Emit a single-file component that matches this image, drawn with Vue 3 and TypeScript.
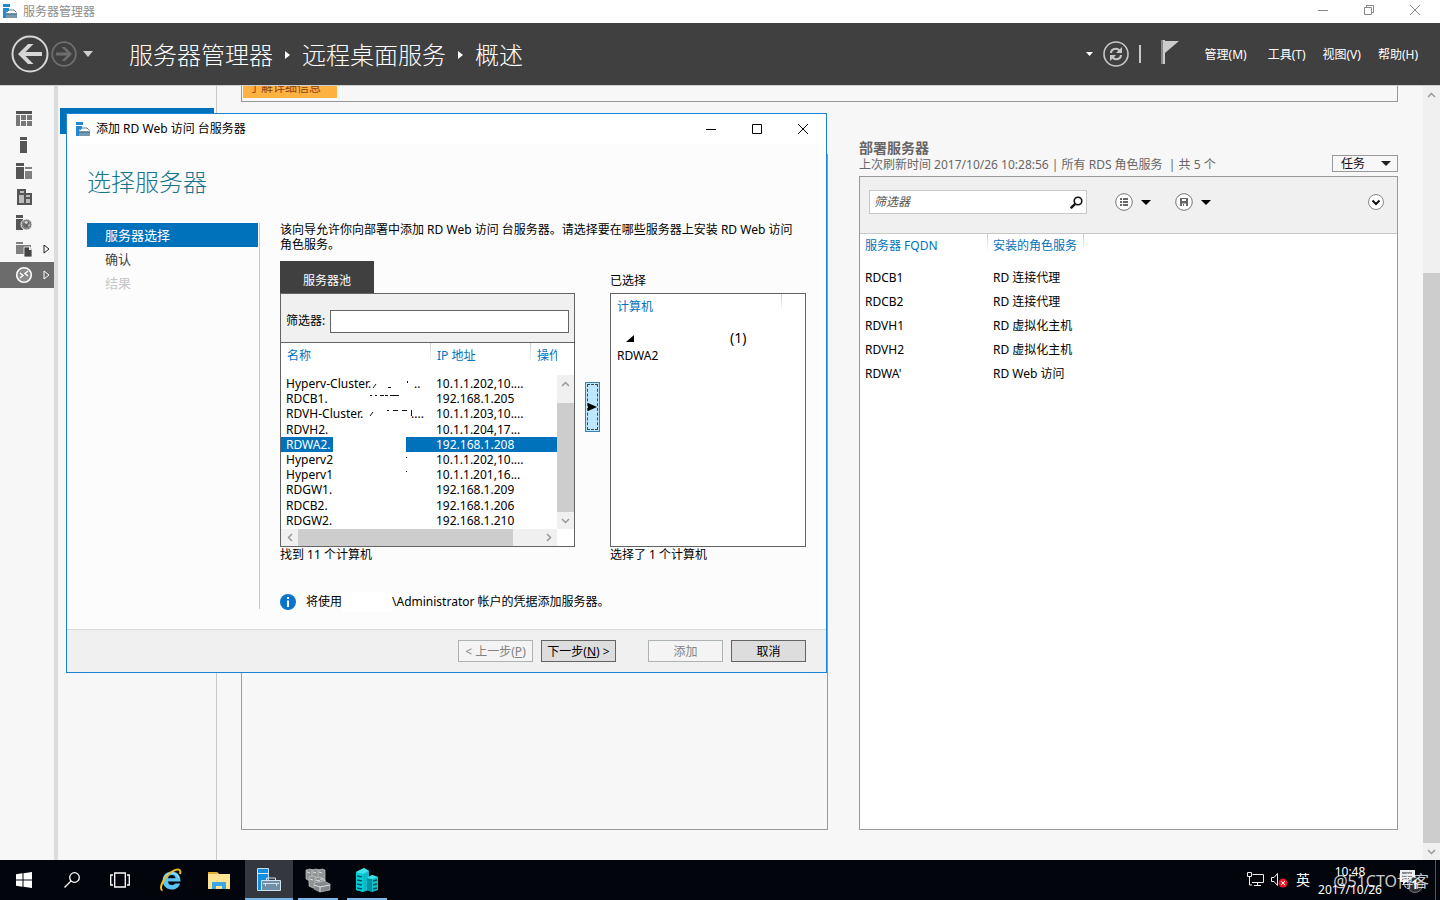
<script setup lang="ts">
import { ref } from 'vue'

interface Server { name: string; ip: string; tail?: string }

const pool: Server[] = [
  { name: 'Hyperv-Cluster.', ip: '10.1.1.202,10....', tail: '\u00a0..' },
  { name: 'RDCB1.', ip: '192.168.1.205' },
  { name: 'RDVH-Cluster.', ip: '10.1.1.203,10....', tail: '....' },
  { name: 'RDVH2.', ip: '10.1.1.204,17...' },
  { name: 'RDWA2.', ip: '192.168.1.208' },
  { name: 'Hyperv2', ip: '10.1.1.202,10....' },
  { name: 'Hyperv1', ip: '10.1.1.201,16...' },
  { name: 'RDGW1.', ip: '192.168.1.209' },
  { name: 'RDCB2.', ip: '192.168.1.206' },
  { name: 'RDGW2.', ip: '192.168.1.210' },
]
const selected = ref('RDWA2.')

const deployed = [
  { fqdn: 'RDCB1', role: 'RD 连接代理' },
  { fqdn: 'RDCB2', role: 'RD 连接代理' },
  { fqdn: 'RDVH1', role: 'RD 虚拟化主机' },
  { fqdn: 'RDVH2', role: 'RD 虚拟化主机' },
  { fqdn: 'RDWA', role: 'RD Web 访问' },
]
const menus = ['管理(M)', '工具(T)', '视图(V)', '帮助(H)']
const poolFilter = ref('')
const filter = ref('')
</script>

<template>
  <div class="desktop">
    <header class="titlebar">
      <svg class="app-icon" width="14" height="15" viewBox="0 0 14 15"><path d="M0 0h7v3H0zM0 4h6v2L3 8v6H0z" fill="#1e8ad6"/><path d="M3 9h11v5H3z" fill="#7896ac"/><path d="M3.500 8.500 6 6h5l2.500 2.500M3 10.500h11" fill="none" stroke="#567c96"/></svg>
      <span>服务器管理器</span>
      <div class="win-controls">
        <button aria-label="最小化"><svg width="10" height="10"><path d="M0 5.500h10" stroke="#888"/></svg></button>
        <button aria-label="还原"><svg width="10" height="10" fill="none" stroke="#888"><path d="M.5 2.500h7v7h-7zM2.500 2.500v-2h7v7h-2"/></svg></button>
        <button aria-label="关闭"><svg width="10" height="10"><path d="M0 0l10 10M10 0L0 10" stroke="#888"/></svg></button>
      </div>
    </header>

    <div class="banner">
      <button class="back" aria-label="后退"><svg width="38" height="38" viewBox="0 0 38 38"><circle cx="19" cy="19" r="17.500" fill="none" stroke="#d6d6d6" stroke-width="2"/><path d="M7 19 17 9h5.500l-8 8H31v4H14.500l8 8H17z" fill="#d6d6d6"/></svg></button>
      <button class="forward" aria-label="前进"><svg width="26" height="26" viewBox="0 0 26 26"><circle cx="13" cy="13" r="11.800" fill="none" stroke="#6e6e6e" stroke-width="1.800"/><path d="M21 13l-7-7h-3.500l5.500 5.500H5v3h11L10.500 20H14z" fill="#6e6e6e"/></svg></button>
      <button class="history" aria-label="历史"><svg width="10" height="6"><path d="M0 0h10L5 6z" fill="#d0d0d0"/></svg></button>
      <nav class="crumbs">
        <span>服务器管理器</span>
        <svg width="5" height="8"><path d="M0 0l5 4-5 4z" fill="#fff"/></svg>
        <span>远程桌面服务</span>
        <svg width="5" height="8"><path d="M0 0l5 4-5 4z" fill="#fff"/></svg>
        <span>概述</span>
      </nav>
      <div class="banner-tools">
        <svg width="7" height="4"><path d="M0 0h7L3.500 4z" fill="#fff"/></svg>
        <button aria-label="刷新"><svg width="26" height="26" viewBox="0 0 26 26" fill="none"><circle cx="13" cy="13" r="12" stroke="#c8c8c8" stroke-width="1.600"/><path d="M8 12c0-4.500 6-5.500 8.500-2.500M18 14c0 4.500-6 5.500-8.500 2.500" stroke="#c8c8c8" stroke-width="2"/><path d="M19 6v6h-6zM7 20v-6h6z" fill="#c8c8c8"/></svg></button>
        <i class="bar"></i>
        <button aria-label="通知" class="flag"><svg width="18" height="24"><path d="M1 0v24" stroke="#888" stroke-width="2"/><path d="M3 0v24" stroke="#ccc" stroke-width="2"/><path d="M4 1h14L4 13z" fill="#ccc"/></svg></button>
      </div>
      <nav class="menus"><button v-for="m in menus" :key="m">{{ m }}</button></nav>
    </div>

    <main class="workspace">
      <nav class="rail">
        <button aria-label="仪表板"><svg width="16" height="16"><path d="M0 0h16v3H0z" fill="#505050"/><path d="M0 4h4v11H0zM5 4h5v5H5zM11 4h5v5h-5zM5 10h5v5H5zM11 10h5v5h-5z" fill="#777"/></svg></button>
        <button aria-label="本地服务器"><svg width="16" height="16"><path d="M4 0h7v3H4zM4 4h7v12H4z" fill="#555"/></svg></button>
        <button aria-label="所有服务器"><svg width="16" height="16"><path d="M0 0h8v3H0zM0 4h8v12H0z" fill="#555"/><path d="M9 4h7v2H9zM9 8h7v8H9z" fill="#808080"/></svg></button>
        <button aria-label="AD DS"><svg width="16" height="16"><path d="M1 0h9v4h6v12H1z" fill="#555"/><path d="M3 6h5v8H3zM10 10h4v4h-4zM4 2h4v2H4zM10 6h4v2h-4z" fill="#bbb"/></svg></button>
        <button aria-label="DNS"><svg width="16" height="16"><path d="M0 0h7v3H0zM0 4h7v11H0z" fill="#555"/><circle cx="10.500" cy="9.500" r="5.500" fill="#666" stroke="#f7f7f7"/><circle cx="10.500" cy="9.500" r="4" fill="none" stroke="#999"/><path d="M8 7l3-1 1 2-2 1zM12 10l2-1-1 3z" fill="#ddd"/></svg></button>
        <button aria-label="文件和存储服务"><svg width="16" height="16"><path d="M0 1h7v2H0zM0 4h15v9H0z" fill="#808080"/><path d="M8 6h6l2 2v8H8z" fill="#444" stroke="#f7f7f7" stroke-width=".8"/><path d="M13 5v4h3" fill="#eee"/></svg><svg class="expand" width="7" height="10"><path d="M1 1v8l5-4z" fill="none" stroke="#222"/></svg></button>
        <button aria-label="远程桌面服务" class="current"><svg width="18" height="18"><circle cx="9" cy="9" r="7.300" fill="#8a8a8a" stroke="#fff" stroke-width="1.600"/><path d="M5 7l3 2.500L5 12M13 5l-3 2.500 3 2.500" fill="none" stroke="#fff" stroke-width="1.400"/></svg><svg class="expand" width="7" height="10"><path d="M1 1v8l5-4z" fill="none" stroke="#fff"/></svg></button>
      </nav>
      <aside class="subnav"><div class="subnav-current"></div></aside>

      <section class="content">
        <div class="notice"><button>了解详细信息</button></div>
        <div class="columns">
          <div class="overview"></div>
          <section class="deploy">
            <div class="deploy-head">
              <div><h2>部署服务器</h2><p>上次刷新时间 2017/10/26 10:28:56 | 所有 RDS 角色服务 &nbsp;| 共 5 个</p></div>
              <button class="tasks">任务<svg width="10" height="5"><path d="M0 0h10L5 5z" fill="#222"/></svg></button>
            </div>
            <div class="deploy-box">
              <div class="toolbar">
                <label class="search"><input v-model="filter" aria-label="筛选服务器" placeholder="筛选器"><svg width="13" height="13" fill="none" stroke="#111"><circle cx="8" cy="5" r="3.800" stroke-width="1.600"/><path d="M5.200 7.800.8 12.200" stroke-width="2.400"/></svg></label>
                <button class="t-list" aria-label="列表"><svg width="18" height="18"><circle cx="9" cy="9" r="8.300" fill="#fff" stroke="#777"/><path d="M5 5h2v2H5zM5 8h2v2H5zM5 11h2v2H5zM8 5h5v2H8zM8 8h5v2H8zM8 11h5v2H8z" fill="#666"/></svg><svg width="10" height="5"><path d="M0 0h10L5 5z"/></svg></button>
                <button class="t-save" aria-label="保存"><svg width="18" height="18"><circle cx="9" cy="9" r="8.300" fill="#fff" stroke="#777"/><path d="M5 5h8v8H5z" fill="#666"/><path d="M7 6h4v2H7zM7 10.500h4V13H7z" fill="#fff"/><path d="M8 11h1v2H8z" fill="#666"/></svg><svg width="10" height="5"><path d="M0 0h10L5 5z"/></svg></button>
                <button class="t-more" aria-label="展开"><svg width="16" height="16"><circle cx="8" cy="8" r="7.500" fill="#fff" stroke="#888"/><path d="M4.500 6.500 8 10l3.500-3.500" fill="none" stroke="#111" stroke-width="2"/></svg></button>
              </div>
              <table class="deploy-table">
                <thead><tr><th>服务器 FQDN</th><th>安装的角色服务</th><th aria-label="其他"></th></tr></thead>
                <tbody><tr v-for="d in deployed" :key="d.fqdn"><td>{{ d.fqdn }}<template v-if="d.fqdn === 'RDWA'">'</template></td><td>{{ d.role }}</td><td></td></tr></tbody>
              </table>
            </div>
          </section>
        </div>
      </section>
      <div class="vscroll page-scroll">
        <button aria-label="向上滚动"><svg width="9" height="6"><path d="M1 5l3.500-3.500L8 5" /></svg></button>
        <div class="track"><i class="thumb"></i></div>
        <button aria-label="向下滚动"><svg width="9" height="6"><path d="M1 1l3.500 3.500L8 1" /></svg></button>
      </div>
    </main>

    <footer class="taskbar">
      <button aria-label="开始"><svg width="16" height="16" fill="#fff"><path d="M0 2.200 6.500 1.300v6.200H0zM7.500 1.200 16 0v7.500H7.500zM0 8.500h6.500v6.200L0 13.800zM7.500 8.500H16V16l-8.500-1.200z"/></svg></button>
      <button aria-label="搜索"><svg width="16" height="16" fill="none" stroke="#fff" stroke-width="1.300"><circle cx="10.500" cy="5.500" r="4.800"/><path d="M7 9 .5 15.500"/></svg></button>
      <button aria-label="任务视图"><svg width="20" height="16" fill="none" stroke="#fff" stroke-width="1.300"><path d="M4.700 1h10.600v14H4.700zM3 3H.7v10H3M17 3h2.300v10H17"/></svg></button>
      <button class="first-app" aria-label="Internet Explorer"><svg width="24" height="24" viewBox="0 0 24 24"><path d="M21.500 13.500H9c.2 2.300 1.700 3.600 3.800 3.600 1.500 0 2.600-.6 3.300-1.700h5c-1.300 4-4.500 6-8.400 6C7.300 21.400 3.600 17.800 3.600 12.600S7.400 3.600 12.800 3.600c5.500 0 8.900 3.900 8.700 9.900zM16.500 10.300c-.3-2-1.700-3.200-3.700-3.200S9.400 8.300 9 10.300z" fill="#5cc4f4"/><path d="M5 11c.8-3.800 3.700-6 7.500-6s6.500 2 7.300 5" fill="none" stroke="#b5e8ff"/><path d="M3.500 22.500C-1 21 5 8 14 3c5-2.600 8.500-2 7 3" fill="none" stroke="#f2bd1d" stroke-width="2"/></svg></button>
      <button aria-label="文件资源管理器"><svg width="22" height="19"><path d="M0 1h9l2 2h11v15H0z" fill="#ffe391"/><path d="M0 1h9l1 2H0z" fill="#e7ae34"/><path d="M4 18v-7h14v7h-4v-3H8v3z" fill="#3ba7e5"/></svg></button>
      <button class="task active" aria-label="服务器管理器"><svg width="26" height="26"><path d="M1.500 1.500h11v22h-11z" fill="#178de0" stroke="#bde0f5"/><path d="M1 6.500h12" stroke="#d6ecf9"/><path d="M5.500 13.500h19v10h-19z" fill="#7190a5" stroke="#d0e2ed"/><path d="M10.500 13v-2h9v2M7 16.500h16M9.500 16v3M20.500 16v3" fill="none" stroke="#d0e2ed"/></svg></button>
      <button class="task" aria-label="工具"><svg width="26" height="25"><g fill="#8f9394" stroke="#c9cdcd" stroke-width=".7"><path d="M1 2l4-1 3 1v9l-3 2-4-2z"/><path d="M7 2l4-1 3 1v10l-3 2-4-2z"/><path d="M13 2l4-1 3 1v11l-3 2-4-2z"/><path d="M4 9l4-1 3 1v9l-3 2-4-2z"/><path d="M10 10l4-1 3 1v9l-3 2-4-2z"/></g><path d="M9 15l10-2 6 3v6l-10 2-6-3z" fill="#81898c" stroke="#b7bcbd" stroke-width=".7"/><path d="M14 14c0-4 6-4 6-1M9 17l6 2 10-2M15 19v5M2 4l3 1M8 4l3 1M14 4l3 1M5 11l3 1M11 12l3 1" fill="none" stroke="#dedede"/></svg></button>
      <button class="task" aria-label="服务器"><svg width="24" height="24"><path d="M1 4l8-4 5 3v19l-6 2-7-2z" fill="#10b9c7"/><path d="M1 4l7 2v18l-7-2z" fill="#00ced9"/><path d="M1 4l8-4 5 3-6 3z" fill="#3fe3ea"/><path d="M12 10l5-3 6 2v13l-6 2-5-2z" fill="#11bfc9"/><path d="M12 10l5 1v13l-5-2z" fill="#0094a0"/><path d="M12 10l5-3 6 2-6 2z" fill="#3fe3ea"/><path d="M2 8l5 1M2 12l5 1M2 16l5 1M2 20l5 1M18 13l4-1M18 17l4-1M18 21l4-1" stroke="#07535b" stroke-width="1.500"/></svg></button>
      <div class="tray">
        <svg width="18" height="16" fill="none" stroke="#eee"><path d="M5.500 2.500h11v8H5M7 13.500h7M10.500 11v2M2.500 5v8H5M.5.500h4v4h-4z"/></svg>
        <svg width="17" height="16"><path d="M.5 5.500H3l3.500-4v12L3 9.500H.5z" fill="none" stroke="#eee"/><circle cx="12" cy="11" r="4.500" fill="#e51b2b"/><path d="M10 9l4 4M14 9l-4 4" stroke="#fff"/></svg>
        <span class="ime">英</span>
        <time class="clock"><span>10:48</span><span>2017/10/26</span></time>
        <div class="alerts">
          <svg width="24" height="26"><path d="M1 3h15v12H7l-3 3v-3H1z" fill="#eee"/><path d="M3 6h10M3 9h10M3 12h7" stroke="#222"/><circle cx="16" cy="18" r="7.500" fill="#303030" stroke="#777"/></svg>
          <b>1</b>
        </div>
        <i class="peek"></i>
      </div>
      <span class="watermark">@51CTO博客</span>
    </footer>

    <section class="wizard" role="dialog" aria-labelledby="wizard-title">
      <header class="wizard-title">
        <svg class="app-icon" width="14" height="15" viewBox="0 0 14 15"><path d="M0 0h7v3H0zM0 4h6v2L3 8v6H0z" fill="#1e8ad6"/><path d="M3 9h11v5H3z" fill="#7896ac"/><path d="M3.500 8.500 6 6h5l2.500 2.500M3 10.500h11" fill="none" stroke="#567c96"/></svg>
        <span id="wizard-title">添加 RD Web 访问 台服务器</span>
        <div class="win-controls">
          <button aria-label="最小化"><svg width="10" height="10"><path d="M0 5.500h10" stroke="#000"/></svg></button>
          <button aria-label="最大化"><svg width="10" height="10"><path d="M.5.500h9v9h-9z" fill="none" stroke="#000"/></svg></button>
          <button aria-label="关闭"><svg width="10" height="10"><path d="M0 0l10 10M10 0L0 10" stroke="#000"/></svg></button>
        </div>
      </header>
      <h1>选择服务器</h1>
      <div class="wizard-body">
        <ol class="steps"><li class="on">服务器选择</li><li>确认</li><li class="off">结果</li></ol>
        <div class="picker">
          <p class="intro">该向导允许你向部署中添加 RD Web 访问 台服务器。请选择要在哪些服务器上安装 RD Web 访问角色服务。</p>
          <div class="lists">
            <div class="pool">
              <button class="tab">服务器池</button>
              <div class="pool-box">
                <div class="pool-filter"><label for="pool-filter">筛选器:</label><input id="pool-filter" v-model="poolFilter"></div>
                <div class="pool-grid">
                  <div class="pool-clip">
                    <table class="pool-table">
                      <colgroup><col class="c-name"><col class="c-ip"><col></colgroup>
                      <thead><tr><th>名称</th><th>IP 地址</th><th>操作</th></tr></thead>
                      <tbody>
                        <tr v-for="s in pool" :key="s.name" :class="{ picked: s.name === selected }" @click="selected = s.name">
                          <td><div class="name"><span>{{ s.name }}</span><span v-if="s.tail" class="tail">{{ s.tail }}</span></div></td><td>{{ s.ip }}</td><td></td>
                        </tr>
                      </tbody>
                    </table>
                    <svg class="marks" width="90" height="105" fill="none" stroke="#111"><path d="M5 61h73v15H5z" fill="#fff" stroke="none"/><path d="M45 12l3-4M60 11.500h3M79.500 5v2M42 19.500h2M47 19.500h2M52 19.500h4M57 19.500h3M62 19.500h9M42 40l3-4M59 34.500h2M65 34.500h5M74 34.500h5M83.500 34v6M78 81.500h1M78 95.500h1"/></svg>
                  </div>
                  <div class="vscroll pool-v">
                    <button aria-label="向上滚动列表"><svg width="9" height="6"><path d="M1 5l3.500-3.500L8 5" /></svg></button>
                    <div class="track"><i class="thumb"></i></div>
                    <button aria-label="向下滚动列表"><svg width="9" height="6"><path d="M1 1l3.500 3.500L8 1" /></svg></button>
                  </div>
                  <div class="hscroll">
                    <button aria-label="向左滚动"><svg width="6" height="9"><path d="M5 1L1.500 4.500 5 8"/></svg></button>
                    <div class="track"><i class="thumb"></i></div>
                    <button aria-label="向右滚动"><svg width="6" height="9"><path d="M1 1l3.500 3.500L1 8"/></svg></button>
                  </div>
                </div>
              </div>
              <p class="count">找到 11 个计算机</p>
            </div>
            <button class="move" aria-label="添加到已选择"><span><svg width="9" height="8"><path d="M0 0l9 4-9 4z"/></svg></span></button>
            <div class="chosen">
              <div class="chosen-label">已选择</div>
              <div class="chosen-box">
                <div class="chosen-head"><span>计算机</span></div>
                <div class="group"><svg width="8" height="7"><path d="M8 0v7H0z"/></svg><span>(1)</span></div>
                <div class="item">RDWA2</div>
              </div>
              <p class="count">选择了 1 个计算机</p>
            </div>
          </div>
          <div class="info">
            <svg width="16" height="16"><circle cx="8" cy="8" r="8" fill="#0a74cb"/><path d="M7 3h2v2H7zM7 6.500h2V13H7z" fill="#fff"/></svg>
            <span>将使用</span><i class="blank"></i><span>\Administrator 帐户的凭据添加服务器。</span>
          </div>
        </div>
      </div>
      <footer class="wizard-foot">
        <button disabled>&lt; 上一步(<u>P</u>)</button>
        <button>下一步(<u>N</u>) &gt;</button>
        <button class="apart" disabled>添加</button>
        <button>取消</button>
      </footer>
    </section>
  </div>
</template>

<style>
body { margin: 0; overflow: hidden; }
</style>

<style scoped>
* { box-sizing: border-box; }
.desktop { position: relative; height: 100vh; display: flex; flex-direction: column; background: #f7f7f7; color: #000; font: 12px/16px "Noto Sans", "Noto Sans CJK SC", sans-serif; }
button { font: inherit; color: inherit; border: 0; padding: 0; background: none; display: flex; align-items: center; justify-content: center; }
input { font: inherit; outline: 0; border-radius: 0; min-width: 0; }
svg { display: block; flex: none; }
h1, h2, p, ol { margin: 0; padding: 0; font-weight: 400; list-style: none; }
table { border-collapse: collapse; table-layout: fixed; width: 100%; }
th, td { padding: 0; text-align: left; font-weight: 400; white-space: nowrap; overflow: hidden; }

.titlebar { height: 23px; flex: none; display: flex; align-items: center; padding-left: 3px; gap: 6px; color: #8c8c8c; background: #fff; }
.win-controls { display: flex; margin-left: auto; align-self: stretch; }
.win-controls button { width: 46px; }
.titlebar .win-controls { padding: 0 2px 3px 0; }

.banner { height: 62px; flex: none; display: flex; align-items: center; background: #404040; color: #fff; padding: 0 22px 0 11px; }
.forward { margin-left: 2px; }
.history { margin-left: 6px; }
.crumbs { display: flex; align-items: center; margin-left: 36px; gap: 12px; padding-top: 2px; font-size: 24px; line-height: 32px; font-weight: 300; }
.banner-tools { display: flex; align-items: center; margin-left: auto; gap: 10px; }
.bar { width: 2px; height: 18px; background: #c8c8c8; }
.flag { margin: 0 26px 4px 10px; }
.menus { display: flex; gap: 17px; padding-top: 2px; }
.menus button:first-child { margin-right: 4px; }

.workspace { flex: 1; min-height: 0; display: flex; border-top: 1px solid #cfcfcf; }
.rail { width: 58px; border-right: 4px solid #dcdcdc; padding-top: 20px; }
.rail button { width: 54px; height: 26px; justify-content: flex-start; padding-left: 16px; }
.rail .current { background: #6c6c6c; padding-left: 15px; }
.rail .expand { margin-left: 11px; }
.rail .current .expand { margin-left: 10px; }
.subnav { width: 159px; border-right: 1px solid #c9c9c9; padding: 22px 2px 0; }
.subnav-current { height: 26px; background: #0072bc; }
.content { flex: 1; min-width: 0; display: flex; flex-direction: column; padding: 0 25px 30px 24px; }
.notice { height: 16px; flex: none; overflow: hidden; border: 1px solid #999; border-top: 0; padding: 0 1px 3px; display: flex; flex-direction: column; justify-content: flex-end; }
.notice button { width: 94px; height: 22px; flex: none; justify-content: flex-start; padding: 1px 0 0 6px; background: #ffb142; color: #8a4316; }
.columns { flex: 1; min-height: 0; display: grid; grid-template-columns: 587fr 539fr; gap: 31px; }
.overview { margin-top: 52px; border: 1px solid #999; }
.deploy { margin-top: 38px; display: flex; flex-direction: column; }
.deploy-head { display: flex; align-items: flex-end; justify-content: space-between; height: 36px; padding-bottom: 4px; color: #666; white-space: nowrap; }
.deploy-head > div { height: 32px; }
.deploy-head h2 { font-size: 14px; font-weight: 700; }
.deploy-head p { padding-top: 1px; }
.tasks { width: 66px; height: 17px; border: 1px solid #999; gap: 16px; padding-left: 2px; color: #111; }
.deploy-box { flex: 1; border: 1px solid #999; background: #fff; }
.toolbar { height: 57px; background: #f0f0f0; border-bottom: 1px solid #c8c8c8; display: flex; align-items: flex-start; padding: 13px 13px 0 9px; }
.toolbar button { height: 24px; gap: 8px; }
.search { display: flex; align-items: center; width: 218px; height: 24px; border: 1px solid #c8c8c8; background: #fff; padding-right: 3px; }
.search input { flex: 1; border: 0; background: none; padding: 0 4px; font-style: italic; }
.search input::placeholder { color: #555; opacity: 1; }
.t-list { margin-left: 28px; }
.t-save { margin-left: 24px; }
.t-more { margin-left: auto; }
.deploy-table th { height: 32px; color: #0072bc; vertical-align: top; padding: 4px 0 0 5px; background: linear-gradient(#ccc, #fff) right top / 1px 18px no-repeat; }
.deploy-table th:first-child { width: 128px; }
.deploy-table th:nth-child(2) { width: 96px; }
.deploy-table th:last-child { background: none; }
.deploy-table td { height: 24px; padding-left: 5px; }

.vscroll { width: 17px; display: flex; flex-direction: column; background: #f0f0f0; }
.vscroll button { height: 17px; flex: none; }
.vscroll path, .hscroll path { fill: none; stroke: #999; stroke-width: 1.5; }
.track { flex: 1; display: flex; }
.vscroll .track { flex-direction: column; }
.thumb { background: #cdcdcd; }
.page-scroll .thumb { margin-top: auto; height: 77%; }

.taskbar { position: relative; height: 40px; flex: none; display: flex; background: #02050b; color: #fff; }
.taskbar > button { width: 48px; }
.taskbar > .first-app { margin-left: 3px; }
.taskbar > .task { margin-left: 1px; background: linear-gradient(#76b9ed, #76b9ed) center bottom / 40px 2px no-repeat; }
.taskbar > .task.active { margin-left: 2px; background: linear-gradient(#76b9ed, #76b9ed) center bottom / 48px 2px no-repeat #34373d; }
.tray { margin-left: auto; display: flex; align-items: center; gap: 6px; }
.ime { margin-left: 2px; font-size: 14px; }
.clock { display: flex; flex-direction: column; align-items: center; line-height: 18px; width: 68px; margin-top: 2px; }
.alerts { position: relative; margin-left: 9px; }
.alerts b { position: absolute; right: 5px; bottom: 0; font-size: 12px; }
.peek { width: 1px; height: 40px; background: #555; margin: 0 4px 0 6px; }
.watermark { position: absolute; right: 11px; bottom: 9px; font-size: 16px; line-height: 20px; color: rgba(255, 255, 255, .8); }

.wizard { position: absolute; left: 66px; top: 113px; width: 761px; height: 560px; display: flex; flex-direction: column; border: 1px solid #1883d7; background: #fcfcfc; }
.wizard-title { height: 30px; flex: none; display: flex; align-items: center; padding-left: 9px; gap: 6px; background: #fff; }
.wizard h1 { margin: 20px 0 22px 20px; font-size: 24px; line-height: 36px; font-weight: 300; color: #16748f; }
.wizard-body { flex: 1; min-height: 0; display: flex; padding: 0 20px 20px; }
.steps { width: 173px; flex: none; margin-top: 1px; border-right: 1px solid #c8c8c8; padding-right: 1px; font-size: 13px; color: #444; }
.steps li { height: 24px; line-height: 24px; padding-left: 18px; }
.steps .on { background: #0072bc; color: #fff; }
.steps .off { color: #c8c8c8; }
.picker { flex: 1; min-width: 0; padding-left: 20px; }
.intro { line-height: 15px; height: 30px; margin-bottom: 9px; padding-right: 6px; }
.lists { display: grid; grid-template-columns: 295px 15px 1fr; gap: 10px; height: 302px; }
.pool { display: flex; flex-direction: column; }
.tab { width: 94px; height: 32px; padding-top: 8px; background: #404040; color: #fff; }
.pool-box { height: 254px; border: 1px solid #646464; background: #fff; }
.pool-filter { height: 49px; padding: 6px 5px 0; display: flex; align-items: center; gap: 5px; background: #f0f0f0; border-bottom: 1px solid #646464; }
.pool-filter input { flex: 1; height: 23px; border: 1px solid #646464; }
.pool-grid { display: grid; grid-template: 186px 17px / 1fr 17px; }
.pool-clip { position: relative; overflow: hidden; }
.pool-table { line-height: 15px; }
.c-name { width: 150px; }
.c-ip { width: 100px; }
.pool-table th { height: 33px; padding: 5px 0 0 6px; color: #0072bc; vertical-align: top; background: linear-gradient(#ccc, #fff) right top / 1px 20px no-repeat; }
.pool-table th:last-child { background: none; }
.pool-table tbody { height: 152px; }
.pool-table td { padding-left: 5px; height: 15px; }
.picked { background: #0072bc; color: #fff; }
.name { display: flex; justify-content: space-between; padding-right: 6px; }
.tail { width: 14px; }
.marks { position: absolute; left: 47px; top: 33px; }
.pool-v { margin-top: 32px; }
.pool-v .thumb { margin-top: 11px; flex: 1; }
.hscroll { display: flex; background: #f0f0f0; }
.hscroll button { width: 17px; }
.hscroll .thumb { width: 89%; }
.move { height: 50px; margin-top: 121px; padding: 1px; border: 1px solid #3c7fb1; background: #bee6fd; }
.move span { width: 11px; height: 46px; display: flex; align-items: center; border: 1px dashed #444; }
.chosen-label { height: 32px; padding-top: 12px; }
.chosen-box { height: 254px; border: 1px solid #646464; background: #fff; }
.chosen-head { height: 36px; margin-right: 23px; padding: 5px 0 0 6px; color: #0072bc; background: linear-gradient(#ccc, #fff) right top / 1px 18px no-repeat; }
.group { display: flex; align-items: center; padding-left: 15px; gap: 96px; font-size: 14px; }
.item { padding: 2px 0 0 6px; }
.info { display: flex; align-items: center; margin-top: 29px; }
.info svg { margin-right: 10px; }
.blank { width: 50px; height: 20px; background: #fff; }
.wizard-foot { height: 43px; flex: none; display: flex; align-items: center; justify-content: flex-end; gap: 8px; padding: 0 20px; border-top: 1px solid #d9d9d9; background: #f0f0f0; }
.wizard-foot button { display: block; width: 75px; height: 22px; padding-top: 2px; border: 1px solid #646464; background: #ddd; white-space: nowrap; text-align: center; }
.wizard-foot button:disabled { border-color: #adb2b5; background: #f4f4f4; color: #838383; }
.wizard-foot .apart { margin-left: 24px; }
</style>
